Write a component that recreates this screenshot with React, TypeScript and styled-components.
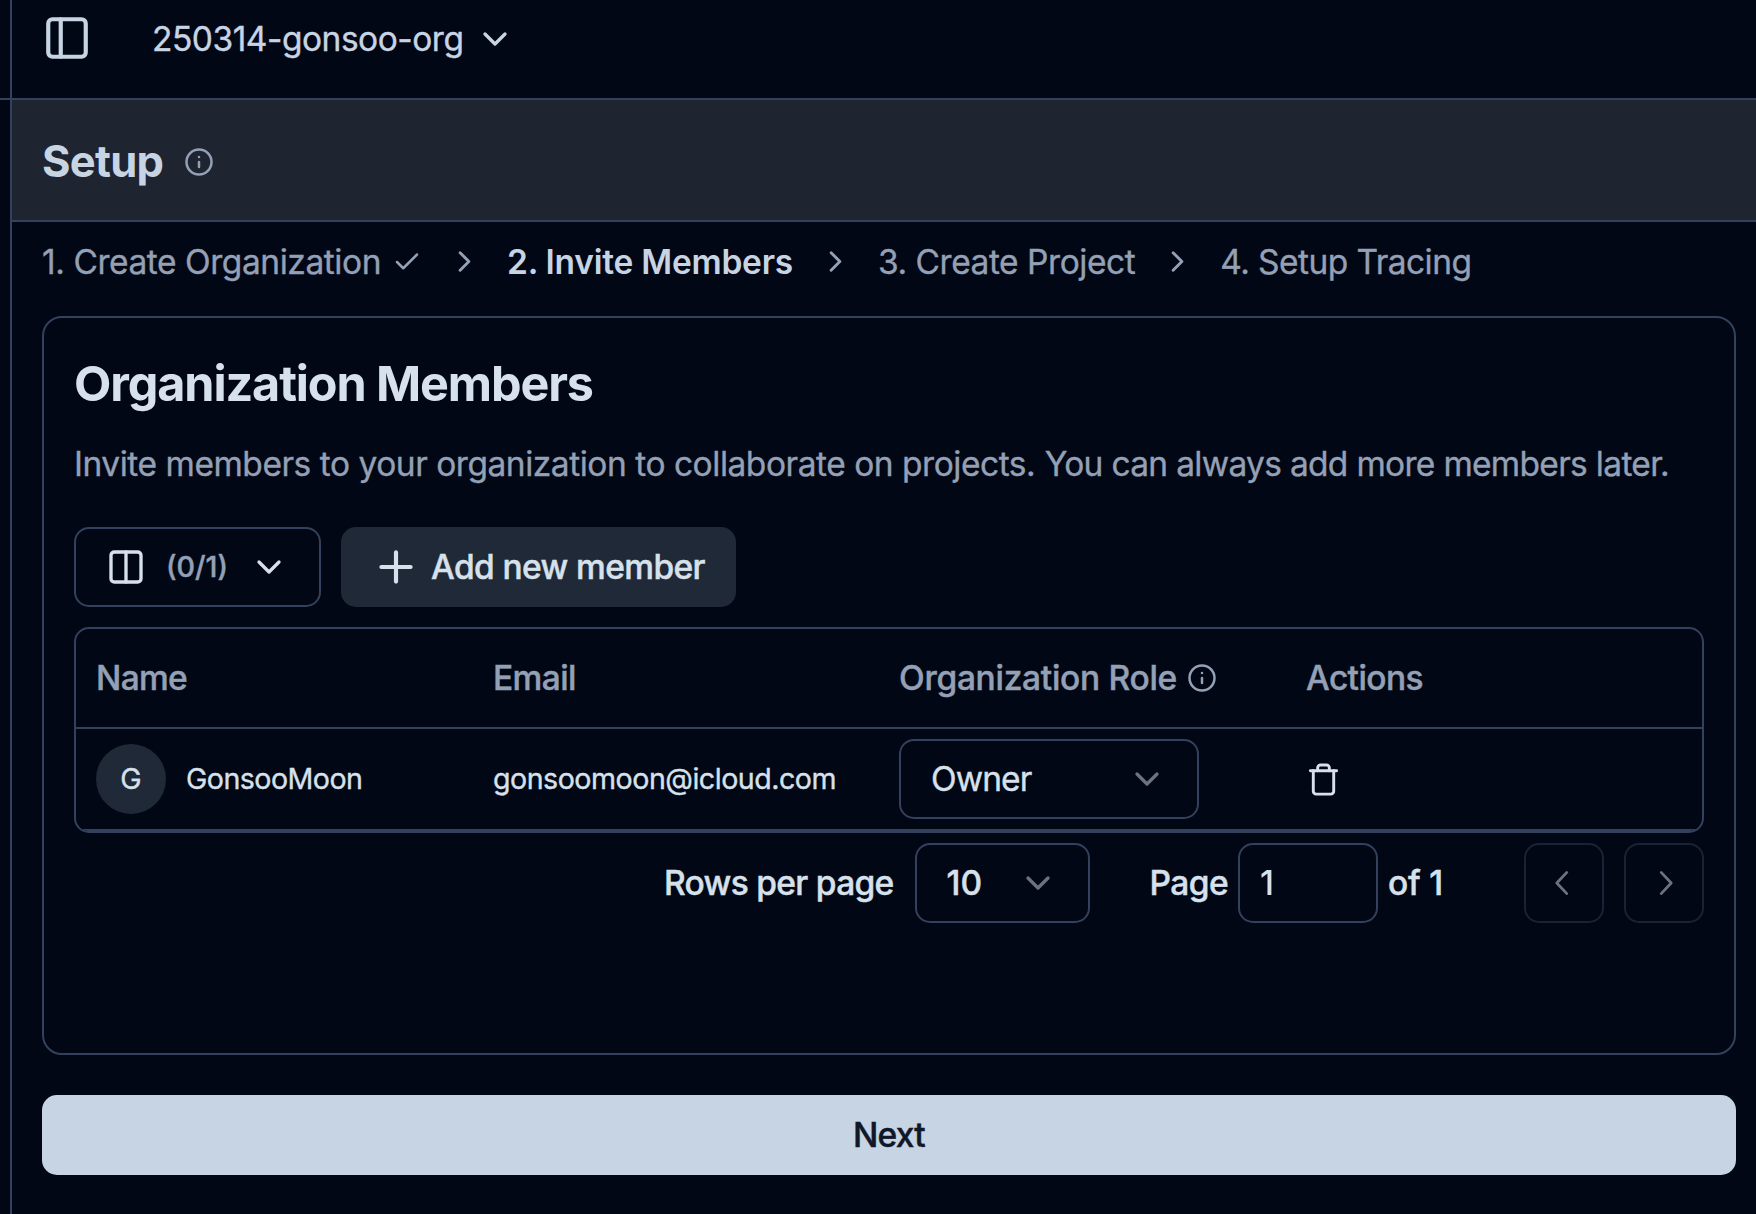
import React from "react";
import styled, { createGlobalStyle, css } from "styled-components";
import {
  Check,
  ChevronDown,
  ChevronRight,
  Columns2,
  Info,
  PanelLeft,
  Plus,
  Trash,
} from "lucide-react";

const color = {
  bg: "#010714",
  border: "#33415c",
  faintBorder: "#1a2236",
  band: "#1e2430",
  fill: "#202938",
  text: "#d7e1ec",
  accent: "#c7d4e4",
  muted: "#94a0b5",
  dim: "#6d727c",
};

const regular = css`
  font-weight: 400;
  -webkit-text-stroke: 0.35px currentColor;
`;

const medium = css`
  font-weight: 500;
  -webkit-text-stroke: 0.45px currentColor;
`;

const GlobalStyle = createGlobalStyle`
  *, *::before, *::after { box-sizing: border-box; }
  body {
    margin: 0;
    background: ${color.bg};
    color: ${color.text};
    font-family: Inter, "Liberation Sans", sans-serif;
    font-size: 33.5px;
    line-height: 50px;
    -webkit-font-smoothing: antialiased;
  }
  button, input { font: inherit; color: inherit; letter-spacing: inherit; }
`;

const Shell = styled.div`
  display: flex;
  width: 1756px;
  height: 1214px;
  overflow: hidden;
`;

const SidebarEdge = styled.aside`
  width: 12px;
  flex: none;
  border-right: 2px solid ${color.border};
`;

const SidebarHead = styled.div`
  height: 100px;
  border-bottom: 2px solid ${color.border};
`;

const Main = styled.main`
  flex: 1;
  min-width: 0;
  display: flex;
  flex-direction: column;
`;

const TopBar = styled.header`
  height: 100px;
  flex: none;
  display: flex;
  align-items: flex-start;
  padding: 13px 30px 0;
  gap: 60px;
  color: ${color.accent};
  border-bottom: 2px solid ${color.border};
  svg { display: block; }
`;

const OrgSwitcher = styled.div`
  display: flex;
  align-items: center;
  gap: 11px;
`;

const Label = styled.span<{ $track?: number; $drop?: number }>`
  ${regular}
  letter-spacing: ${(p) => p.$track ?? -0.6}px;
  padding-top: ${(p) => p.$drop ?? 0}px;
  white-space: nowrap;
`;

const MediumLabel = styled(Label)`
  ${medium}
`;

const StrongLabel = styled(Label)`
  font-weight: 600;
  -webkit-text-stroke: 0;
`;

const TitleBand = styled.div`
  height: 122px;
  flex: none;
  display: flex;
  align-items: center;
  gap: 21px;
  padding: 3px 30px 0;
  background: ${color.band};
  border-bottom: 2px solid ${color.border};
  color: ${color.muted};
`;

const PageTitle = styled.h1`
  margin: 0 0 2px;
  font-size: 43.5px;
  font-weight: 700;
  letter-spacing: -0.7px;
  color: ${color.accent};
`;

const Steps = styled.nav`
  display: flex;
  align-items: center;
  gap: 25px;
  padding: 14px 30px 0;
  height: 64px;
  color: ${color.muted};
`;

const Step = styled.span<{ $active?: boolean }>`
  display: flex;
  align-items: center;
  gap: 11px;
  padding-top: 1px;
  color: ${(p) => (p.$active ? color.accent : "inherit")};
`;

const Card = styled.section`
  margin: 30px 20px 0 30px;
  height: 739px;
  flex: none;
  padding: 41px 30px 0;
  border: 2px solid ${color.border};
  border-radius: 20px;
`;

const CardTitle = styled.h2`
  margin: 0;
  font-size: 48.5px;
  line-height: 50px;
  font-weight: 700;
  letter-spacing: -1.11px;
`;

const Description = styled.p`
  margin: 30px 0 38px;
  line-height: 50px;
  white-space: nowrap;
  color: ${color.muted};
`;

const Toolbar = styled.div`
  display: flex;
  gap: 20px;
`;

const ColumnsButton = styled.button`
  display: flex;
  align-items: center;
  width: 247px;
  height: 80px;
  padding: 0 30px;
  border: 2px solid ${color.border};
  border-radius: 15px;
  background: none;
`;

const Count = styled.span`
  ${medium}
  margin: 0 auto 0 20px;
  font-size: 28.6px;
  color: ${color.muted};
`;

const AddButton = styled.button`
  display: flex;
  align-items: center;
  gap: 10px;
  width: 395px;
  height: 80px;
  padding: 0 0 0 30px;
  border: 0;
  border-radius: 15px;
  background: ${color.fill};
`;

const Table = styled.div`
  margin-top: 20px;
  border: 2px solid ${color.border};
  border-radius: 15px;
  overflow: hidden;
`;

const Row = styled.div<{ $head?: boolean }>`
  display: grid;
  grid-template-columns: 397px 406px 407px 1fr;
  align-items: center;
  height: ${(p) => (p.$head ? 100 : 102)}px;
  border-bottom: 2px solid ${color.border};
  color: ${(p) => (p.$head ? color.muted : "inherit")};
  font-size: ${(p) => (p.$head ? 33.5 : 28.6)}px;
`;

const Cell = styled.div<{ $gap?: number }>`
  display: flex;
  align-items: center;
  gap: ${(p) => p.$gap ?? 0}px;
  padding-left: 20px;
`;

const Avatar = styled.span`
  ${regular}
  display: grid;
  place-items: center;
  width: 70px;
  height: 70px;
  border-radius: 50%;
  background: ${color.fill};
`;

const Select = styled.button<{ $width: number }>`
  display: flex;
  align-items: center;
  justify-content: space-between;
  width: ${(p) => p.$width}px;
  height: 80px;
  padding: 0 30px;
  border: 2px solid ${color.border};
  border-radius: 15px;
  background: none;
  font-size: 33.5px;
  svg { color: ${color.dim}; }
`;

const Pagination = styled.div`
  display: flex;
  align-items: center;
  justify-content: flex-end;
  margin-top: 10px;
`;

const PagerGroup = styled.div<{ $gap: number; $end: number }>`
  display: flex;
  align-items: center;
  gap: ${(p) => p.$gap}px;
  margin-right: ${(p) => p.$end}px;
`;

const PageInput = styled.input`
  width: 140px;
  height: 80px;
  padding: 0 20px;
  border: 2px solid ${color.border};
  border-radius: 15px;
  background: none;
  outline: none;
  font-weight: 500;
`;

const PagerButton = styled.button`
  display: grid;
  place-items: center;
  width: 80px;
  height: 80px;
  padding: 0;
  border: 2px solid ${color.faintBorder};
  border-radius: 15px;
  background: none;
  color: ${color.dim};
`;

function PagerArrow({ points }: { points: string }) {
  return (
    <svg
      width="40"
      height="40"
      viewBox="0 0 40 40"
      fill="none"
      stroke="currentColor"
      strokeWidth="2.8"
      strokeLinecap="round"
      strokeLinejoin="round"
    >
      <polyline points={points} />
    </svg>
  );
}

const NextButton = styled.button`
  flex: none;
  height: 80px;
  margin: 40px 20px 0 30px;
  border: 0;
  border-radius: 15px;
  background: ${color.accent};
  color: #0f1728;
`;

export default function App() {
  return (
    <>
      <GlobalStyle />
      <Shell>
        <SidebarEdge>
          <SidebarHead />
        </SidebarEdge>
        <Main>
          <TopBar>
            <PanelLeft size={50} />
            <OrgSwitcher>
              <Label $track={-0.48} $drop={1}>250314-gonsoo-org</Label>
              <ChevronDown size={40} />
            </OrgSwitcher>
          </TopBar>
          <TitleBand>
            <PageTitle>Setup</PageTitle>
            <Info size={30} />
          </TitleBand>
          <Steps>
            <Step>
              <Label $track={-0.44}>1. Create Organization</Label>
              <Check size={30} />
            </Step>
            <ChevronRight size={35} />
            <Step $active>
              <StrongLabel $track={-0.24}>2. Invite Members</StrongLabel>
            </Step>
            <ChevronRight size={35} />
            <Step>
              <Label $track={-0.46}>3. Create Project</Label>
            </Step>
            <ChevronRight size={35} />
            <Step>
              <Label $track={-0.55}>4. Setup Tracing</Label>
            </Step>
          </Steps>
          <Card>
            <CardTitle>Organization Members</CardTitle>
            <Description>
              <Label $track={-0.47}>
                Invite members to your organization to collaborate on projects.
              </Label>{" "}
              <Label $track={-0.69}>You can always add more members later.</Label>
            </Description>
            <Toolbar>
              <ColumnsButton>
                <Columns2 size={40} />
                <Count>(0/1)</Count>
                <ChevronDown size={40} />
              </ColumnsButton>
              <AddButton>
                <Plus size={50} />
                <MediumLabel>Add new member</MediumLabel>
              </AddButton>
            </Toolbar>
            <Table>
              <Row $head>
                <Cell><MediumLabel $track={-0.7}>Name</MediumLabel></Cell>
                <Cell><MediumLabel>Email</MediumLabel></Cell>
                <Cell $gap={10}>
                  <MediumLabel $track={-0.29}>Organization Role</MediumLabel>
                  <Info size={30} />
                </Cell>
                <Cell><MediumLabel $track={-0.6}>Actions</MediumLabel></Cell>
              </Row>
              <Row>
                <Cell $gap={20}>
                  <Avatar>G</Avatar>
                  <Label $track={-0.54}>GonsooMoon</Label>
                </Cell>
                <Cell><Label $track={-0.49}>gonsoomoon@icloud.com</Label></Cell>
                <Cell>
                  <Select $width={300}>
                    <Label $track={-0.9}>Owner</Label>
                    <ChevronDown size={40} />
                  </Select>
                </Cell>
                <Cell><Trash size={35} /></Cell>
              </Row>
            </Table>
            <Pagination>
              <PagerGroup $gap={21} $end={60}>
                <MediumLabel $track={-0.68}>Rows per page</MediumLabel>
                <Select $width={175}>
                  <MediumLabel $track={0}>10</MediumLabel>
                  <ChevronDown size={40} />
                </Select>
              </PagerGroup>
              <PagerGroup $gap={10} $end={81}>
                <MediumLabel $track={-0.6}>Page</MediumLabel>
                <PageInput defaultValue="1" />
                <MediumLabel $track={-0.2}>of 1</MediumLabel>
              </PagerGroup>
              <PagerGroup $gap={20} $end={0}>
                <PagerButton><PagerArrow points="22.8,9.4 12.8,20 22.8,30.6" /></PagerButton>
                <PagerButton><PagerArrow points="17.2,9.4 27.2,20 17.2,30.6" /></PagerButton>
              </PagerGroup>
            </Pagination>
          </Card>
          <NextButton>
            <MediumLabel $track={-0.7}>Next</MediumLabel>
          </NextButton>
        </Main>
      </Shell>
    </>
  );
}
